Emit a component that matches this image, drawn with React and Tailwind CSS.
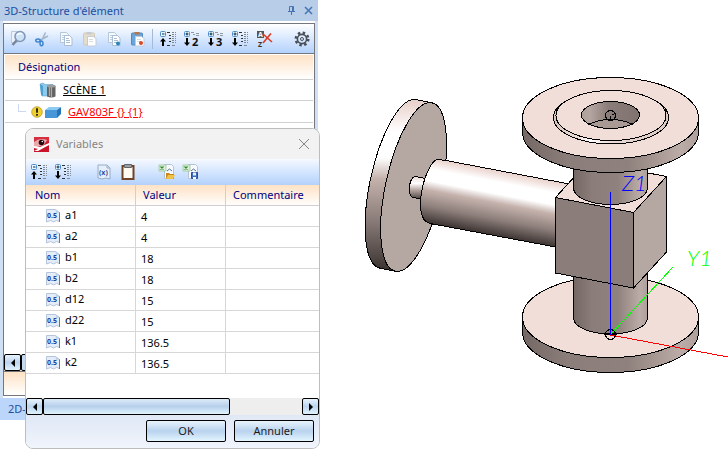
const variables = [
    { name: 'a1', value: '4' },
    { name: 'a2', value: '4' },
    { name: 'b1', value: '18' },
    { name: 'b2', value: '18' },
    { name: 'd12', value: '15' },
    { name: 'd22', value: '15' },
    { name: 'k1', value: '136.5' },
    { name: 'k2', value: '136.5' },
];

function Icon({ size = 'w-[18px] h-[18px]', children }) {
    return (
        <svg viewBox="0 0 18 18" className={`${size} overflow-visible`} fill="none" aria-hidden="true">
            {children}
        </svg>
    );
}

function SearchIcon() {
    return (
        <Icon>
            <path d="M2.500 1.500h6v11h-6z" fill="#eef3fb" stroke="#bcc9dc" />
            <circle cx="11" cy="6.500" r="5" fill="#cfe3f8" stroke="#8298b8" strokeWidth="1.600" />
            <path d="M8 5a4 4 0 0 1 5-1" stroke="#fff" strokeWidth="1.500" />
            <path d="M7.500 10.500L3.500 15" stroke="#77869f" strokeWidth="2.600" />
        </Icon>
    );
}

function CutIcon() {
    return (
        <Icon>
            <path d="M12.500 2.500L8.500 11M15 6L6.500 10.500" stroke="#a3b6cb" strokeWidth="1.600" />
            <ellipse cx="5" cy="10.500" rx="2.200" ry="1.500" stroke="#3f84cf" strokeWidth="1.500" />
            <ellipse cx="8.500" cy="13.500" rx="1.500" ry="2.200" stroke="#3f84cf" strokeWidth="1.500" />
        </Icon>
    );
}

function CopyIcon({ dot }) {
    return (
        <Icon>
            <path d="M3.500 2.500h6l2 2v8h-8z" fill="#f7fafd" stroke="#b5c6da" />
            <path d="M5 5.500h4M5 7.500h4M5 9.500h3" stroke="#bfcfdf" />
            <path d="M7.500 5.500h5l2.500 2.500v7.500H7.500z" fill="#fff" stroke="#a9bdd4" />
            <path d="M9 8.500h3M9 10.500h4M9 12.500h4" stroke="#a8c0dc" />
            {dot && <circle cx="13" cy="13.500" r="2" fill="#2586b8" />}
        </Icon>
    );
}

function PasteIcon({ active }) {
    return (
        <Icon>
            <rect x="2.500" y="3" width="11" height="12" rx="1" fill={active ? '#6aa5db' : '#e4ddcb'} stroke={active ? '#5288bd' : '#d3c9b4'} />
            <path d="M5.500 2h5v2.500h-5z" fill={active ? '#b5754d' : '#c6cbd3'} />
            <path d="M6.500 6.500h6l2.500 2v7.500H6.500z" fill="#fff" stroke="#c2ccd8" />
            <path d="M8 9.500h4M8 11.500h4" stroke="#d3dbe4" />
            {active && <circle cx="12" cy="13" r="2" fill="#d9472a" />}
        </Icon>
    );
}

function LevelIcon({ sign, level }) {
    return (
        <Icon>
            <rect x="1.500" y="1.500" width="5" height="5" rx="1" fill="#e9f5ff" stroke="#4c8fd0" />
            <path d={sign === 'minus' ? 'M3 4h2.500' : 'M2.500 4h3M4 2.500v3'} stroke="#10283f" />
            {sign === 'minus' ? (
                <path d="M4 8l3 3.500H5V16H3v-4.500H1z" fill="#000" />
            ) : (
                <path d="M4 16l3-3.500H5V8H3v4.500H1z" fill="#000" />
            )}
            {level ? (
                <>
                    <path d="M8 2.500h3M10 4.500h2M13 3.500h3M13 5.500h3" stroke="#8e99a5" />
                    <text x="9" y="16" fill="#111" className="font-['Noto_Sans'] text-[11px] font-bold">{level}</text>
                </>
            ) : (
                <>
                    <path d="M8 2.500h3M10 5.500h2M10 8.500h2M10 11.500h2M8 15.500h3" stroke="#333" />
                    <path d="M13 2.500h2M16 2.500h1M13 4.500h2M16 4.500h1M13 6.500h2M16 6.500h1M13 8.500h2M16 8.500h1M13 10.500h2M16 10.500h1M13 12.500h2M16 12.500h1M13 15.500h3" stroke="#7f8a96" />
                </>
            )}
        </Icon>
    );
}

function SortOffIcon() {
    return (
        <Icon>
            <path d="M2 1h7v7H2z" fill="#555" />
            <text x="3" y="7" fill="#fff" className="font-['Noto_Sans'] text-[7px] font-bold">A</text>
            <text x="3" y="17" fill="#333" className="font-['Noto_Sans'] text-[7px] font-bold">Z</text>
            <path d="M8 4l9 8M16 3.500L8 13" stroke="#d93a24" strokeWidth="1.600" />
        </Icon>
    );
}

function GearIcon() {
    return (
        <Icon>
            <circle cx="9" cy="9" r="6.200" stroke="#4b4f55" strokeWidth="2.600" strokeDasharray="2.430 2.430" />
            <circle cx="9" cy="9" r="4.600" stroke="#4b4f55" strokeWidth="1.600" />
            <circle cx="9" cy="9" r="1.500" stroke="#4b4f55" />
        </Icon>
    );
}

function BinderIcon() {
    return (
        <Icon>
            <path d="M1 3l3-1 2 1.500h8V15H3z" fill="#8cc9ea" stroke="#5aa6d0" strokeWidth=".6" />
            <path d="M1 3l3 2v10l-2-1z" fill="#4f9fce" />
            <path d="M8 5h8.500v10.500q-4 2-8.500 0z" fill="#626262" />
            <path d="M10.500 6v9M12.500 6v10" stroke="#aaa" strokeWidth="1.200" />
            <ellipse cx="12.200" cy="5" rx="4.300" ry="1.500" fill="#9b9b9b" />
        </Icon>
    );
}

function WarningIcon() {
    return (
        <Icon size="w-3 h-3">
            <circle cx="9" cy="9" r="8" fill="#f0d030" stroke="#a88d18" />
            <path d="M9 3.500v6.500M9 12v2.500" stroke="#222" strokeWidth="2.800" />
        </Icon>
    );
}

function BoxIcon() {
    return (
        <Icon>
            <path d="M1 7l4-3h12l-4 3z" fill="#8cc9f3" />
            <path d="M1 7h12v8H1z" fill="#4797d8" />
            <path d="M13 7l4-3v7l-4 4z" fill="#2673b5" />
        </Icon>
    );
}

function AppLogo() {
    return (
        <svg viewBox="0 0 15 15" className="w-[15px] h-[15px]" aria-hidden="true">
            <path d="M0 0h15v15H0z" fill="#c9142b" />
            <path d="M0 0h15v4L0 10z" fill="#d82f3f" />
            <path d="M0 5q6-5 13-2l-3 5-10 3z" fill="#e9a9ad" />
            <circle cx="7.500" cy="5.500" r="2.800" fill="#220c10" />
            <circle cx="8.300" cy="4.500" r=".8" fill="#fff" />
            <path d="M0 9l6 1 9-4v2L4 14H0l4-2-4-1z" fill="#fff" />
        </svg>
    );
}

function FunctionIcon() {
    return (
        <Icon>
            <path d="M3 2h9l3 3v11l-4-1-4 1-4-1z" fill="#e6eff9" stroke="#96acc8" />
            <path d="M12 2v3h3" stroke="#96acc8" />
            <text x="4" y="12" fill="#3151a0" className="font-['Noto_Sans'] text-[7px] font-bold">(x)</text>
        </Icon>
    );
}

function ClipboardIcon() {
    return (
        <Icon>
            <rect x="3.500" y="3" width="11" height="13" fill="#fdfaf2" stroke="#704329" strokeWidth="2" />
            <path d="M5.500 1.500h7v3h-7z" fill="#9da0a4" stroke="#606468" />
        </Icon>
    );
}

function SheetIcon({ save }) {
    return (
        <Icon>
            <path d="M6.500 1.500h7l2 2v12h-9z" fill="#f7fbff" stroke="#b3c4d9" />
            <path d="M9 8l2.500-2L14 8" stroke="#536b8c" />
            <path d="M1 2h7v6H1z" fill="#dceed8" stroke="#9cc696" strokeWidth=".8" />
            <path d="M2.500 3.500l3 3M5.500 3.500l-3 3" stroke="#308a34" strokeWidth="1.200" />
            {save ? (
                <>
                    <path d="M9.500 9.500h6v6h-6z" fill="#3e6ebc" stroke="#2d4f8e" />
                    <path d="M11 9.500h3v3h-3z" fill="#e6effb" />
                    <path d="M11 14h3v2h-3z" fill="#fff" />
                </>
            ) : (
                <>
                    <path d="M8 10h3l1 1h4v5H8z" fill="#c4891d" />
                    <path d="M8 16l2-4h7l-2 4z" fill="#f2c146" />
                </>
            )}
        </Icon>
    );
}

function NumberIcon() {
    return (
        <svg viewBox="0 0 15 15" className="w-[15px] h-[15px] shrink-0" fill="none" aria-hidden="true">
            <path d="M.5 1.500h9l4 3v9l-3-1-3 1.500-3-1.500-4 1.500z" fill="#e3ecf7" stroke="#b4c4da" />
            <path d="M9.500 1.500l4 3-3.500.5z" fill="#bcd0e8" />
            <path d="M13.500 4.500v9.500" stroke="#5b7bac" />
            <text x="1" y="10" fill="#23419f" className="font-['Noto_Sans'] text-[7px] font-bold">0.5</text>
        </svg>
    );
}

function ToolButton({ label, children }) {
    return (
        <button type="button" aria-label={label} className="flex w-6 h-6 shrink-0 items-center justify-center">
            {children}
        </button>
    );
}

function ScrollArrow({ direction }) {
    return (
        <button
            type="button"
            aria-label={direction === 'left' ? 'Défiler à gauche' : 'Défiler à droite'}
            className="flex w-[17px] h-[17px] shrink-0 items-center justify-center rounded-[2px] border border-black bg-linear-to-b from-[#e8f4fd] via-[#bcd4ef] to-[#e0f2fc]"
        >
            <svg viewBox="0 0 8 8" className="w-2 h-2" aria-hidden="true">
                <path d={direction === 'left' ? 'M6 0v8L2 4z' : 'M2 0v8l4-4z'} />
            </svg>
        </button>
    );
}

function StructurePanel() {
    return (
        <aside className="flex flex-col w-[318px] shrink-0 border-x-3 border-[#cfe0f4]">
            <header className="-mx-[3px] flex h-[21px] items-center bg-[#b7cde8] px-1 text-[#1d4f9f]">
                <h1>3D-Structure d'élément</h1>
                <button type="button" aria-label="Épingler" className="ml-auto">
                    <svg viewBox="0 0 9 9" className="w-[9px] h-[9px]" fill="none" stroke="#4674b4" aria-hidden="true">
                        <path d="M2.500 5.500v-5h4v5M5.500.5v5M1 5.500h7M4.500 5.500V9" />
                    </svg>
                </button>
                <button type="button" aria-label="Fermer le panneau" className="ml-2 mr-px">
                    <svg viewBox="0 0 9 9" className="w-[9px] h-[9px]" stroke="#4674b4" strokeWidth="1.500" aria-hidden="true">
                        <path d="M1 1l7 7M8 1L1 8" />
                    </svg>
                </button>
            </header>
            <div className="mt-[2px] flex flex-col border border-[#75777c] bg-white">
                <div className="flex h-[30px] items-center border-b border-[#75777c] bg-linear-to-b from-white to-[#b3d1fc] pl-[2px]">
                    <ToolButton label="Rechercher"><SearchIcon /></ToolButton>
                    <ToolButton label="Couper"><CutIcon /></ToolButton>
                    <ToolButton label="Copier"><CopyIcon /></ToolButton>
                    <ToolButton label="Coller"><PasteIcon /></ToolButton>
                    <ToolButton label="Copier avec référence"><CopyIcon dot /></ToolButton>
                    <ToolButton label="Coller avec référence"><PasteIcon active /></ToolButton>
                    <span className="ml-[2px] mr-[3px] h-5 w-px bg-[#a3bad8]" />
                    <ToolButton label="Réduire tout"><LevelIcon sign="minus" /></ToolButton>
                    <ToolButton label="Niveau 2"><LevelIcon sign="plus" level="2" /></ToolButton>
                    <ToolButton label="Niveau 3"><LevelIcon sign="plus" level="3" /></ToolButton>
                    <ToolButton label="Développer tout"><LevelIcon sign="plus" /></ToolButton>
                    <ToolButton label="Annuler le tri"><SortOffIcon /></ToolButton>
                    <span className="grow" />
                    <ToolButton label="Paramètres"><GearIcon /></ToolButton>
                </div>
                <h2 className="mx-px mt-px flex h-[25px] items-center border-b border-[#d0d0d0] bg-linear-to-b from-[#fee2c5] to-white px-[13px] text-[#000080]">
                    Désignation
                </h2>
                <ul className="mx-px h-[274px]">
                    <li className="flex h-[21px] items-center border-b border-[#d0d0d0] pl-[34px]">
                        <BinderIcon />
                        <a href="#scene" className="ml-[6px] text-black underline">SCÈNE 1</a>
                    </li>
                    <li className="flex h-[22px] items-center border-b border-[#d0d0d0] pl-[13px]">
                        <span className="mb-2 mr-1 w-2 h-2 border-b border-l border-[#cbd8f1]" />
                        <span className="ml-px"><WarningIcon /></span>
                        <span className="ml-px"><BoxIcon /></span>
                        <a href="#gav803f" className="ml-[6px] text-[#f00] underline">GAV803F {'{}'} {'{1}'}</a>
                    </li>
                </ul>
                <div className="flex h-[17px] bg-[#eee]">
                    <ScrollArrow direction="left" />
                    <span className="w-40 rounded-[2px] border border-black bg-[#c5daf1]" />
                </div>
                <div className="h-6 border-t border-[#75777c] bg-linear-to-b from-[#fee2c5] to-white" />
            </div>
            <footer className="-mx-[3px] mt-[2px] flex h-[22px] items-center bg-[#bcd6fb] px-2 text-[#1d4f9f]">
                2D-
            </footer>
        </aside>
    );
}

function VariablesDialog() {
    return (
        <section
            role="dialog"
            aria-label="Variables"
            className="absolute left-[25px] top-[128px] w-[295px] overflow-hidden rounded-lg border border-[#bdbdbd] bg-white"
        >
            <header className="flex h-[30px] items-center bg-[#f2f2f2] pl-2 pr-[10px] text-[#858585]">
                <AppLogo />
                <h2 className="ml-[7px]">Variables</h2>
                <button type="button" aria-label="Fermer" className="ml-auto">
                    <svg viewBox="0 0 10 10" className="w-[10px] h-[10px]" stroke="#858585" aria-hidden="true">
                        <path d="M0 0l10 10M10 0L0 10" />
                    </svg>
                </button>
            </header>
            <div className="flex h-[26px] items-center bg-linear-to-b from-[#f5f9ff] to-[#b3d1fc] pl-px">
                <ToolButton label="Réduire tout"><LevelIcon sign="minus" /></ToolButton>
                <ToolButton label="Développer tout"><LevelIcon sign="plus" /></ToolButton>
                <span className="w-[17px]" />
                <ToolButton label="Insérer une fonction"><FunctionIcon /></ToolButton>
                <ToolButton label="Presse-papiers"><ClipboardIcon /></ToolButton>
                <span className="w-[15px]" />
                <ToolButton label="Ouvrir un tableau"><SheetIcon /></ToolButton>
                <ToolButton label="Enregistrer le tableau"><SheetIcon save /></ToolButton>
            </div>
            <table className="mb-6 w-full table-fixed border-separate border-spacing-0 text-left">
                <thead className="bg-linear-to-b from-[#fee2c5] to-white text-[#000080]">
                    <tr className="h-[21px]">
                        <th className="w-[110px] border-b border-r border-[#d0d0d0] p-0 pl-[9px] font-normal">Nom</th>
                        <th className="w-[90px] border-b border-r border-[#d0d0d0] p-0 pl-[7px] font-normal">Valeur</th>
                        <th className="border-b border-[#d0d0d0] p-0 pl-[7px] font-normal">Commentaire</th>
                    </tr>
                </thead>
                <tbody className="text-black">
                    {variables.map((row) => (
                        <tr key={row.name} className="h-[21px]">
                            <td className="border-b border-r border-[#d7d7d7] p-0 pb-[2px] pl-5">
                                <div className="flex items-center gap-1">
                                    <NumberIcon />
                                    {row.name}
                                </div>
                            </td>
                            <td className="border-b border-r border-[#d7d7d7] p-0 pl-[5px] pt-px">{row.value}</td>
                            <td className="border-b border-[#d7d7d7] p-0" />
                        </tr>
                    ))}
                </tbody>
            </table>
            <div className="flex h-[17px] bg-[#eee]">
                <ScrollArrow direction="left" />
                <span className="w-[187px] rounded-[2px] border border-black bg-linear-to-b from-[#dcebf9] via-[#b7cfec] to-[#e0f4fd]" />
                <span className="grow" />
                <ScrollArrow direction="right" />
            </div>
            <footer className="flex h-[33px] items-center justify-end gap-2 bg-linear-to-b from-[#e0e8f6] to-[#f0f4fb] pr-[5px] pb-px">
                <button type="button" className="w-20 h-[22px] rounded-[2px] border border-black bg-linear-to-b from-[#e8f4fd] via-[#b9d2ee] to-[#e2f6fe]">OK</button>
                <button type="button" className="w-20 h-[22px] rounded-[2px] border border-black bg-linear-to-b from-[#e8f4fd] via-[#b9d2ee] to-[#e2f6fe]">Annuler</button>
            </footer>
        </section>
    );
}

function ValveModel() {
    return (
        <svg viewBox="318 0 410 449" className="block w-full" role="img" aria-label="GAV803F" stroke="#000" fill="none" shapeRendering="crispEdges">
            <defs>
                <linearGradient id="pipe" gradientUnits="userSpaceOnUse" x1="450" y1="161" x2="437.700" y2="225">
                    <stop offset="0" stopColor="#e8d0ca" />
                    <stop offset=".18" stopColor="#fff" />
                    <stop offset=".36" stopColor="#fff" />
                    <stop offset=".5" stopColor="#c5b2ad" />
                    <stop offset=".75" stopColor="#8c7e7a" />
                    <stop offset="1" stopColor="#3b3331" />
                </linearGradient>
                <linearGradient id="rim" gradientUnits="userSpaceOnUse" x1="0" y1="100" x2="0" y2="270">
                    <stop offset="0" stopColor="#e8d0ca" />
                    <stop offset=".19" stopColor="#fff" />
                    <stop offset=".34" stopColor="#fff" />
                    <stop offset=".46" stopColor="#c5b2ad" />
                    <stop offset=".7" stopColor="#8c7e7a" />
                    <stop offset="1" stopColor="#3b3331" />
                </linearGradient>
                <linearGradient id="stub" x1="0" y1="0" x2="0" y2="1">
                    <stop offset="0" stopColor="#ecdad5" />
                    <stop offset=".3" stopColor="#fff" />
                    <stop offset=".6" stopColor="#b5a5a0" />
                    <stop offset="1" stopColor="#4b413e" />
                </linearGradient>
                <linearGradient id="side">
                    <stop offset="0" stopColor="#746865" />
                    <stop offset=".25" stopColor="#8b7d79" />
                    <stop offset=".6" stopColor="#8f817d" />
                    <stop offset=".9" stopColor="#bcaca7" />
                    <stop offset="1" stopColor="#ae9f9a" />
                </linearGradient>
                <linearGradient id="bore">
                    <stop offset="0" stopColor="#b0a19c" />
                    <stop offset=".15" stopColor="#b5a5a0" />
                    <stop offset=".45" stopColor="#8b7d79" />
                    <stop offset="1" stopColor="#80736f" />
                </linearGradient>
                <linearGradient id="lip">
                    <stop offset="0" stopColor="#d9c5bf" />
                    <stop offset=".2" stopColor="#ecdad5" />
                    <stop offset=".32" stopColor="#fff" />
                    <stop offset=".5" stopColor="#ecdad5" />
                    <stop offset="1" stopColor="#dbc9c3" />
                </linearGradient>
            </defs>

            {/* side flange and horizontal pipe */}
            <path d="M431.900 102.800L415.600 99.500A28 86.200 12.300 0 0 379 267.900L395.300 271.200z" fill="url(#rim)" />
            <ellipse cx="413.600" cy="187" rx="28" ry="86.200" transform="rotate(12.300 413.600 187)" fill="#b5a7a2" />
            <path d="M427 178.700L415.500 176.500C411 177 409.300 184 409.300 189C409.300 194 410 196.500 412.500 197.300L423 199.200" fill="url(#stub)" />
            <path d="M446 160.500L572 184.500L555.500 202V247L433 224L428 222.800C421 220 419.500 207 421 196C423 180 430 162 437 159.500z" fill="url(#pipe)" />

            {/* lower flange */}
            <path d="M522.500 317v15a88 40.500 0 0 0 176 0v-15z" fill="url(#side)" />
            <ellipse cx="610.500" cy="317" rx="88" ry="40.500" fill="#f2ded9" />
            <path d="M573.500 270v48a37 16 0 0 0 74 0v-48z" fill="url(#side)" />

            {/* body */}
            <path d="M555.500 197.500L588.500 161.500L666.500 176.500L633.500 212.500z" fill="#f2ded9" />
            <path d="M555.500 197.500L633.500 212.500V288L555.500 273z" fill="#8b7d79" />
            <path d="M633.500 212.500L666.500 176.500V252L633.500 288z" fill="#b5a7a2" />

            {/* upper flange */}
            <path d="M573.500 160v28a37 16.500 0 0 0 74 0v-28z" fill="url(#side)" />
            <path d="M522.500 118v14a88 40.500 0 0 0 176 0v-14z" fill="url(#side)" />
            <ellipse cx="610.500" cy="118" rx="88" ry="40.500" fill="#f2ded9" />
            <ellipse cx="611" cy="117.500" rx="57.500" ry="26.500" fill="url(#lip)" />
            <ellipse cx="611" cy="115.500" rx="55" ry="25" fill="#f2ded9" />
            <ellipse cx="610.500" cy="115" rx="29" ry="13.500" fill="url(#bore)" />
            <path d="M589 124.200Q610.500 114.500 632.500 124.200Q610.500 133 589 124.200z" fill="#a99a95" />
            <circle cx="610.500" cy="115.500" r="5" />
            <path d="M610.500 115.500v5M612 115l2 -1" />

            {/* axes */}
            <path d="M610.500 335L728 357" stroke="#f00" />
            <path d="M611 334L673 267" stroke="#0f0" />
            <circle cx="610.500" cy="334.500" r="5" />
            <path d="M604 334.500h13" />
            <path d="M610.500 192v143" stroke="#00f" />
            <g stroke="none" className="font-['Lato'] text-[22px] font-light italic">
                <text x="622" y="191" fill="#00f">Z1</text>
                <text x="687" y="266" fill="#0f0">Y1</text>
            </g>
        </svg>
    );
}

export default function App() {
    return (
        <div className="relative flex items-start bg-white font-['Noto_Sans','Liberation_Sans',sans-serif] text-[11px] leading-[14px] text-[#1c1c1c]">
            <StructurePanel />
            <main className="min-w-0 grow">
                <ValveModel />
            </main>
            <VariablesDialog />
        </div>
    );
}
